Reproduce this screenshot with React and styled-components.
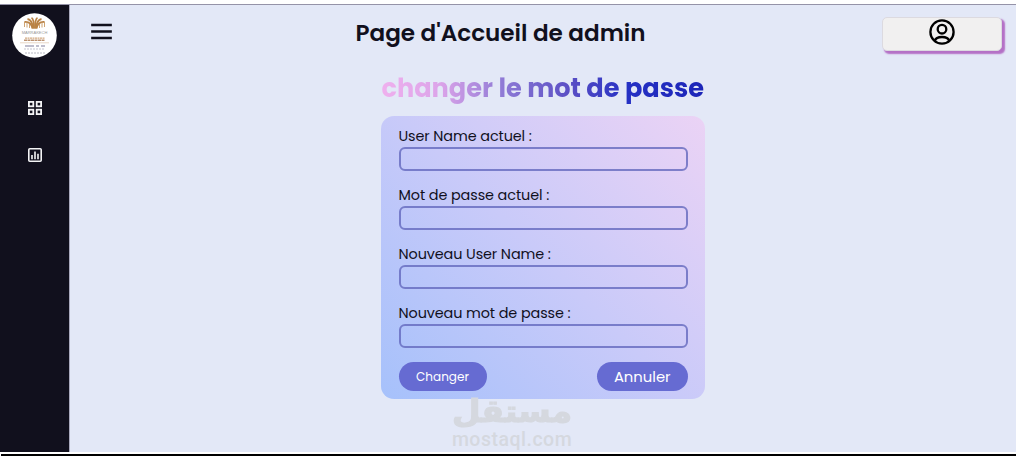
import React from 'react';
import styled, { createGlobalStyle } from 'styled-components';
import { BiMenu } from 'react-icons/bi';

const fields = [
  { id: 'currentUser', label: 'User Name actuel :', type: 'text' },
  { id: 'currentPassword', label: 'Mot de passe actuel :', type: 'password' },
  { id: 'newUser', label: 'Nouveau User Name :', type: 'text' },
  { id: 'newPassword', label: 'Nouveau mot de passe :', type: 'password' },
];

const Logo = () => (
  <svg width="45" height="45" viewBox="0 0 45 45">
    <circle cx="22.5" cy="22.5" r="22.3" fill="#fff" />
    <g fill="none" stroke="#b98245" strokeWidth="1.8">
      <path d="M20.5 15.5C19.5 11 17 8.5 12.5 9" />
      <path d="M21 15.5C20.5 10 19 6.5 15.5 6" />
      <path d="M22 15.5C22 9 21 5.5 19.5 4.8" />
      <path d="M23 15.5C23 9 24 5.5 25.5 4.8" />
      <path d="M24 15.5C24.5 10 26 6.5 29.5 6" />
      <path d="M24.5 15.5C25.5 11 28 8.5 32.5 9" />
    </g>
    <path d="M12.5 9v5M32.5 9v5M15 9.5v5M30 9.5v5M17.5 11v4M27.5 11v4" stroke="#c99a62" strokeWidth="0.9" />
    <text x="22.5" y="20.5" textAnchor="middle" fontFamily="'Liberation Sans', sans-serif" fontSize="4" fill="#999">MARRAKECH</text>
    <g fill="none">
      <path d="M13 25.2h20" stroke="#d2a981" strokeWidth="1.2" strokeDasharray="2 .5" />
      <path d="M12 27.2h21" stroke="#bb9271" strokeWidth="1.4" strokeDasharray="3 .5" />
      <path d="M8 29.8h29" stroke="#ddc4ac" strokeWidth=".7" />
      <path d="M13 33h9M24 33h3M29 33h4" stroke="#aaa9bd" strokeWidth="1.3" />
      <path d="M12 36h21" stroke="#c3c3cf" strokeWidth="1.2" strokeDasharray="2 1" />
      <path d="M13 40h20" stroke="#d1d1d8" strokeWidth="1.5" strokeDasharray="2 1" />
    </g>
  </svg>
);

const GridIcon = () => (
  <svg width="14" height="14" viewBox="0 0 14 14" fill="none" stroke="currentColor" strokeWidth="1.8">
    <rect x="0.9" y="0.9" width="4.4" height="4.4" />
    <rect x="8.7" y="0.9" width="4.4" height="4.4" />
    <rect x="0.9" y="8.7" width="4.4" height="4.4" />
    <rect x="8.7" y="8.7" width="4.4" height="4.4" />
  </svg>
);

const ChartIcon = () => (
  <svg width="14" height="14" viewBox="0 0 14 14" fill="none" stroke="currentColor">
    <rect x="0.8" y="0.8" width="12.4" height="12.4" rx="1" strokeWidth="1.6" />
    <path d="M4 7v4.2M7 3.5v7.7M10 5.7v5.5" strokeWidth="1.6" />
  </svg>
);

const UserIcon = () => (
  <svg width="26" height="26" viewBox="0 0 26 26" fill="none" stroke="#000" strokeWidth="2.3">
    <circle cx="13" cy="13" r="11.6" />
    <circle cx="13" cy="10.2" r="4.3" />
    <path d="M5.8 21.8C6.6 18.9 9 18 13 18S19.4 18.9 20.2 21.8" />
  </svg>
);

const App = () => {
  return (
    <>
      <GlobalStyle />
      <Screen>
        <Sidebar>
          <Logo />
          <SideNav>
            <SideLink href="#"><GridIcon /></SideLink>
            <SideLink href="#"><ChartIcon /></SideLink>
          </SideNav>
        </Sidebar>
        <Main>
          <TopBar>
            <MenuButton type="button"><BiMenu size={31} /></MenuButton>
            <PageTitle>Page d'Accueil de admin</PageTitle>
            <ProfileButton type="button"><UserIcon /></ProfileButton>
          </TopBar>
          <Content>
            <FormTitle>changer le mot de passe</FormTitle>
            <Form>
              {fields.map((f) => (
                <Field key={f.id}>
                  <Label htmlFor={f.id}>{f.label}</Label>
                  <Input id={f.id} type={f.type} />
                </Field>
              ))}
              <Actions>
                <Button type="button" $width={88} $size={12}>Changer</Button>
                <Button type="button" $width={90.5} $size={14.8}>Annuler</Button>
              </Actions>
            </Form>
          </Content>
          <Watermark>
            <WatermarkArabic lang="ar">مستقل</WatermarkArabic>
            <WatermarkLatin>mostaql.com</WatermarkLatin>
          </Watermark>
        </Main>
      </Screen>
      <BottomLine />
    </>
  );
};

const GlobalStyle = createGlobalStyle`
  * {
    box-sizing: border-box;
  }

  body {
    margin: 0;
    padding-top: 4px;
    background: #fff;
    font-family: Poppins, Inter, sans-serif;
    overflow: hidden;
  }
`;

const Screen = styled.div`
  display: flex;
  width: 1016px;
  height: 448px;
  border-top: 1px solid #9593a8;
  background: #e3e8f7;
`;

const Sidebar = styled.aside`
  display: flex;
  flex-direction: column;
  align-items: center;
  width: 69px;
  padding-top: 8px;
  background: #11101d;
`;

const SideNav = styled.nav`
  display: flex;
  flex-direction: column;
  gap: 28px;
  margin-top: 40px;
`;

const SideLink = styled.a`
  display: flex;
  align-items: center;
  justify-content: center;
  height: 19px;
  color: #f4f4f6;
`;

const Main = styled.main`
  position: relative;
  flex: 1;
  border-left: 1px solid #aaaabd;
`;

const TopBar = styled.header`
  display: flex;
  align-items: center;
  height: 56px;
  padding: 0 14px 0 16px;
`;

const MenuButton = styled.button`
  display: flex;
  width: 31px;
  padding: 0;
  margin-bottom: 4px;
  border: 0;
  background: none;
  color: #11101d;
`;

const PageTitle = styled.h1`
  margin: 0 auto 0 238.5px;
  color: #11101d;
  font-size: 23.1px;
  font-weight: 600;
  line-height: 34px;
  white-space: nowrap;
`;

const ProfileButton = styled.button`
  display: flex;
  align-items: center;
  justify-content: center;
  width: 120px;
  height: 34px;
  margin-top: 1px;
  padding: 0 0 3px;
  border: 1px solid #dcdae0;
  border-radius: 5px;
  background: #f1f0f0;
  box-shadow: 2.5px 2.5px 1.5px #b470c6;
`;

const Content = styled.section`
  width: 324px;
  margin-left: 311px;
`;

const FormTitle = styled.h2`
  width: max-content;
  margin: 8px 0 9px 0.5px;
  background: linear-gradient(90deg, #efb0ee 0%, #dca4e9 18%, #8d79d5 38%, #5b4fc5 58%, #2631c4 76%, #1c25b8 100%);
  -webkit-background-clip: text;
  background-clip: text;
  color: transparent;
  font-size: 25.6px;
  font-weight: 700;
  line-height: 38px;
  white-space: nowrap;
`;

const Form = styled.form`
  height: 283px;
  padding: 9px 17.5px 0;
  border-radius: 13px;
  background: linear-gradient(45deg, #a6c1fb 0%, #c9caf9 50%, #ebd3f5 100%);
`;

const Field = styled.div`
  height: 59px;
`;

const Label = styled.label`
  display: block;
  height: 21.5px;
  padding-top: 1px;
  color: #11101d;
  font-size: 14.4px;
  letter-spacing: -0.1px;
  line-height: 20px;
  white-space: nowrap;
`;

const Input = styled.input`
  display: block;
  width: 100%;
  height: 24.5px;
  padding: 0 8px;
  border: 2px solid rgba(98, 102, 188, 0.78);
  border-radius: 6px;
  background: transparent;
  outline: none;
`;

const Actions = styled.div`
  display: flex;
  justify-content: space-between;
  margin-top: 1px;
`;

const Button = styled.button`
  width: ${(props) => props.$width}px;
  height: 28.5px;
  padding: 1px 0 0;
  border: 0;
  border-radius: 15px;
  background: #666bd2;
  color: #fff;
  font-family: inherit;
  font-size: ${(props) => props.$size}px;
`;

/* sits over the bottom edge of the form */
const Watermark = styled.div`
  position: absolute;
  left: 380px;
  bottom: -1px;
  width: 124px;
  height: 60px;
  color: #d5d8df;
  text-align: center;
  pointer-events: none;
`;

const WatermarkArabic = styled.div`
  height: 37px;
  font-family: 'DejaVu Sans', sans-serif;
  font-size: 31px;
  font-weight: 700;
  line-height: 37px;
  transform: scaleX(1.06);
  -webkit-text-stroke: 1.2px #d5d8df;
`;

const WatermarkLatin = styled.div`
  font-family: Roboto, sans-serif;
  font-size: 19.5px;
  font-weight: 500;
  letter-spacing: 0.5px;
  line-height: 20px;
`;

const BottomLine = styled.div`
  width: 1015px;
  height: 2px;
  margin: 2px 0 0 1px;
  background: #000;
`;

export default App;
